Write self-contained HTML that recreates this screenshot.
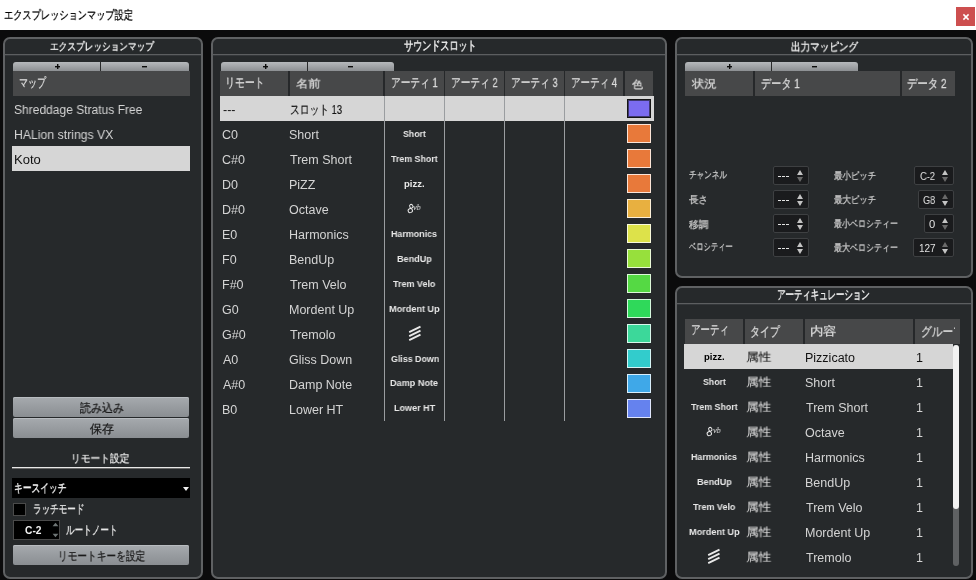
<!DOCTYPE html><html lang="ja"><head><meta charset="utf-8"><style>span{will-change:transform;-webkit-font-smoothing:antialiased}html,body{margin:0;padding:0;width:976px;height:580px;overflow:hidden;background:#0b0b0c;position:relative}</style></head><body><div style="position:absolute;left:0px;top:0px;width:976px;height:30px;background:#ffffff"></div><div style="position:absolute;left:0px;top:30px;width:976px;height:550px;background:#0b0b0c"></div><span style="position:absolute;left:3.53px;top:9.00px;white-space:pre;line-height:1;font-family:'Liberation Sans',sans-serif;font-size:12px;font-weight:400;color:#000000;transform:scale(0.7681,1.0000);transform-origin:0 0;-webkit-text-stroke:0.3px #000000;">エクスプレッションマップ設定</span><div style="position:absolute;left:956px;top:7px;width:19px;height:19px;background:#cd4f4f"></div><svg style="position:absolute;left:960px;top:11px" width="12" height="12" viewBox="0 0 12 12"><path d="M3.4 3.4 L8.6 8.6 M8.6 3.4 L3.4 8.6" stroke="#ffffff" stroke-width="1.5" fill="none"/></svg><div style="position:absolute;left:3px;top:37px;width:200px;height:542px;box-sizing:border-box;border:2px solid #5f6163;border-radius:7px;background:#26292b"></div><div style="position:absolute;left:5px;top:54px;width:196px;height:1px;background:#5c5e60"></div><div style="position:absolute;left:5px;top:55px;width:196px;height:1px;background:#34373a"></div><span style="position:absolute;left:49.98px;top:41.00px;white-space:pre;line-height:1;font-family:'Liberation Sans',sans-serif;font-size:12px;font-weight:400;color:#f2f2f2;transform:scale(0.7222,0.9000);transform-origin:0 0;-webkit-text-stroke:0.35px #f2f2f2;">エクスプレッションマップ</span><div style="position:absolute;left:211px;top:37px;width:456px;height:542px;box-sizing:border-box;border:2px solid #5f6163;border-radius:7px;background:#26292b"></div><div style="position:absolute;left:213px;top:54px;width:452px;height:1px;background:#5c5e60"></div><div style="position:absolute;left:213px;top:55px;width:452px;height:1px;background:#34373a"></div><span style="position:absolute;left:404.30px;top:39.35px;white-space:pre;line-height:1;font-family:'Liberation Sans',sans-serif;font-size:12px;font-weight:400;color:#f2f2f2;transform:scale(0.7527,1.0455);transform-origin:0 0;-webkit-text-stroke:0.35px #f2f2f2;">サウンドスロット</span><div style="position:absolute;left:675px;top:37px;width:298px;height:241px;box-sizing:border-box;border:2px solid #5f6163;border-radius:7px;background:#26292b"></div><div style="position:absolute;left:677px;top:54px;width:294px;height:1px;background:#5c5e60"></div><div style="position:absolute;left:677px;top:55px;width:294px;height:1px;background:#34373a"></div><span style="position:absolute;left:790.60px;top:41.00px;white-space:pre;line-height:1;font-family:'Liberation Sans',sans-serif;font-size:12px;font-weight:400;color:#f2f2f2;transform:scale(0.7976,0.9583);transform-origin:0 0;-webkit-text-stroke:0.35px #f2f2f2;">出力マッピング</span><div style="position:absolute;left:675px;top:286px;width:298px;height:293px;box-sizing:border-box;border:2px solid #5f6163;border-radius:7px;background:#26292b"></div><div style="position:absolute;left:677px;top:303px;width:294px;height:1px;background:#5c5e60"></div><div style="position:absolute;left:677px;top:304px;width:294px;height:1px;background:#34373a"></div><span style="position:absolute;left:777.40px;top:288.35px;white-space:pre;line-height:1;font-family:'Liberation Sans',sans-serif;font-size:12px;font-weight:400;color:#f2f2f2;transform:scale(0.7000,1.0455);transform-origin:0 0;-webkit-text-stroke:0.35px #f2f2f2;">アーティキュレーション</span><div style="position:absolute;left:13px;top:62px;width:87px;height:9px;background:linear-gradient(#b6b9bc,#8c8f92);border-top-left-radius:3px"></div><div style="position:absolute;left:100px;top:62px;width:1px;height:9px;background:#2a2b2c"></div><div style="position:absolute;left:101px;top:62px;width:88px;height:9px;background:linear-gradient(#b6b9bc,#8c8f92);border-top-right-radius:3px"></div><div style="position:absolute;left:55px;top:66px;width:5px;height:1px;background:#0c0c0c;box-shadow:0 0.4px 0 #0c0c0c"></div><div style="position:absolute;left:57px;top:64px;width:1px;height:5px;background:#0c0c0c;box-shadow:0.4px 0 0 #0c0c0c"></div><div style="position:absolute;left:142px;top:66px;width:5px;height:1px;background:#0c0c0c;box-shadow:0 0.4px 0 #0c0c0c"></div><div style="position:absolute;left:13px;top:71px;width:177px;height:25px;background:#474849"></div><span style="position:absolute;left:19.31px;top:76.00px;white-space:pre;line-height:1;font-family:'Liberation Sans',sans-serif;font-size:13px;font-weight:400;color:#dadada;transform:scale(0.6923,1.0000);transform-origin:0 0;-webkit-text-stroke:0.3px #dadada;">マップ</span><span style="position:absolute;left:13.54px;top:104.00px;white-space:pre;line-height:1;font-family:'Liberation Sans',sans-serif;font-size:12.5px;font-weight:400;color:#d4d4d4;transform:scale(0.9621,1.0000);transform-origin:0 0;">Shreddage Stratus Free</span><span style="position:absolute;left:13.82px;top:129.00px;white-space:pre;line-height:1;font-family:'Liberation Sans',sans-serif;font-size:12.5px;font-weight:400;color:#d4d4d4;transform:scale(0.9800,1.0000);transform-origin:0 0;">HALion strings VX</span><div style="position:absolute;left:12px;top:146px;width:178px;height:25px;background:#d6d6d6"></div><span style="position:absolute;left:13.76px;top:154.00px;white-space:pre;line-height:1;font-family:'Liberation Sans',sans-serif;font-size:12.5px;font-weight:400;color:#111;transform:scale(1.0417,1.0000);transform-origin:0 0;">Koto</span><div style="position:absolute;left:13px;top:397px;width:176px;height:20px;background:linear-gradient(#a6aaae,#8a8e92);border-radius:2px;box-shadow:inset 0 1px 0 #b8bcc0"></div><span style="position:absolute;left:80.00px;top:402.40px;white-space:pre;line-height:1;font-family:'Liberation Sans',sans-serif;font-size:12px;font-weight:400;color:#1a1a1a;transform:scale(0.9167,1.0000);transform-origin:0 0;-webkit-text-stroke:0.25px #1a1a1a;">読み込み</span><div style="position:absolute;left:13px;top:418px;width:176px;height:20px;background:linear-gradient(#a6aaae,#8a8e92);border-radius:2px;box-shadow:inset 0 1px 0 #b8bcc0"></div><span style="position:absolute;left:90.00px;top:423.40px;white-space:pre;line-height:1;font-family:'Liberation Sans',sans-serif;font-size:12px;font-weight:400;color:#1a1a1a;-webkit-text-stroke:0.25px #1a1a1a;">保存</span><span style="position:absolute;left:71.38px;top:453.30px;white-space:pre;line-height:1;font-family:'Liberation Sans',sans-serif;font-size:12px;font-weight:400;color:#ececec;transform:scale(0.8116,0.8917);transform-origin:0 0;-webkit-text-stroke:0.3px #ececec;">リモート設定</span><div style="position:absolute;left:12px;top:467px;width:178px;height:1px;background:#e8e8e8"></div><div style="position:absolute;left:12px;top:468px;width:178px;height:1px;background:#6a6a6a"></div><div style="position:absolute;left:12px;top:478px;width:178px;height:20px;background:#000"></div><span style="position:absolute;left:14.27px;top:482.00px;white-space:pre;line-height:1;font-family:'Liberation Sans',sans-serif;font-size:12px;font-weight:400;color:#f0f0f0;transform:scale(0.7286,1.0000);transform-origin:0 0;-webkit-text-stroke:0.4px #f0f0f0;">キースイッチ</span><div style="position:absolute;left:183px;top:487px;width:0;height:0;border-left:3.5px solid transparent;border-right:3.5px solid transparent;border-top:4px solid #f0f0f0"></div><div style="position:absolute;left:13px;top:503px;width:13px;height:13px;box-sizing:border-box;background:#000;border:1px solid #4a4a4a"></div><span style="position:absolute;left:32.69px;top:502.60px;white-space:pre;line-height:1;font-family:'Liberation Sans',sans-serif;font-size:12px;font-weight:400;color:#e6e6e6;transform:scale(0.7143,1.0000);transform-origin:0 0;-webkit-text-stroke:0.3px #e6e6e6;">ラッチモード</span><div style="position:absolute;left:13px;top:520px;width:47px;height:20px;box-sizing:border-box;background:#000;border:1px solid #4a4a4a"></div><span style="position:absolute;left:24.80px;top:526.00px;white-space:pre;line-height:1;font-family:'Liberation Sans',sans-serif;font-size:10px;font-weight:700;color:#f0f0f0;transform:scale(1.0250,1.0000);transform-origin:0 0;">C-2</span><span style="position:absolute;left:66.20px;top:524.00px;white-space:pre;line-height:1;font-family:'Liberation Sans',sans-serif;font-size:12px;font-weight:400;color:#e6e6e6;transform:scale(0.7174,1.0000);transform-origin:0 0;-webkit-text-stroke:0.3px #e6e6e6;">ルートノート</span><svg style="position:absolute;left:52px;top:522px" width="8" height="16" viewBox="0 0 8 16"><path d="M0.6 4.2 L3.5 0.8 L6.4 4.2 Z" fill="#6e7575"/><path d="M0.6 11.8 L3.5 15.2 L6.4 11.8 Z" fill="#6e7575"/></svg><div style="position:absolute;left:13px;top:545px;width:176px;height:20px;background:linear-gradient(#a6aaae,#8a8e92);border-radius:2px;box-shadow:inset 0 1px 0 #b8bcc0"></div><span style="position:absolute;left:57.58px;top:550.40px;white-space:pre;line-height:1;font-family:'Liberation Sans',sans-serif;font-size:12px;font-weight:400;color:#1a1a1a;transform:scale(0.8077,1.0000);transform-origin:0 0;-webkit-text-stroke:0.25px #1a1a1a;">リモートキーを設定</span><div style="position:absolute;left:221px;top:62px;width:86px;height:9px;background:linear-gradient(#b6b9bc,#8c8f92);border-top-left-radius:3px"></div><div style="position:absolute;left:307px;top:62px;width:1px;height:9px;background:#2a2b2c"></div><div style="position:absolute;left:308px;top:62px;width:86px;height:9px;background:linear-gradient(#b6b9bc,#8c8f92);border-top-right-radius:3px"></div><div style="position:absolute;left:263px;top:66px;width:5px;height:1px;background:#0c0c0c;box-shadow:0 0.4px 0 #0c0c0c"></div><div style="position:absolute;left:265px;top:64px;width:1px;height:5px;background:#0c0c0c;box-shadow:0.4px 0 0 #0c0c0c"></div><div style="position:absolute;left:348px;top:66px;width:5px;height:1px;background:#0c0c0c;box-shadow:0 0.4px 0 #0c0c0c"></div><div style="position:absolute;left:220px;top:71px;width:433px;height:25px;background:#474849"></div><div style="position:absolute;left:288px;top:71px;width:2px;height:25px;background:#26282a"></div><div style="position:absolute;left:383px;top:71px;width:2px;height:25px;background:#26282a"></div><div style="position:absolute;left:444px;top:71px;width:1px;height:25px;background:#26282a"></div><div style="position:absolute;left:504px;top:71px;width:1px;height:25px;background:#26282a"></div><div style="position:absolute;left:564px;top:71px;width:1px;height:25px;background:#26282a"></div><div style="position:absolute;left:623px;top:71px;width:2px;height:25px;background:#26282a"></div><span style="position:absolute;left:225.02px;top:76.40px;white-space:pre;line-height:1;font-family:'Liberation Sans',sans-serif;font-size:13px;font-weight:400;color:#dadada;transform:scale(0.7609,1.0000);transform-origin:0 0;-webkit-text-stroke:0.3px #dadada;">リモート</span><span style="position:absolute;left:295.60px;top:78.10px;white-space:pre;line-height:1;font-family:'Liberation Sans',sans-serif;font-size:13px;font-weight:400;color:#dadada;transform:scale(0.9462,0.8462);transform-origin:0 0;-webkit-text-stroke:0.3px #dadada;">名前</span><span style="position:absolute;left:390.65px;top:76.00px;white-space:pre;line-height:1;font-family:'Liberation Sans',sans-serif;font-size:13px;font-weight:400;color:#dadada;transform:scale(0.7459,1.0000);transform-origin:0 0;-webkit-text-stroke:0.3px #dadada;">アーティ 1</span><span style="position:absolute;left:450.85px;top:76.00px;white-space:pre;line-height:1;font-family:'Liberation Sans',sans-serif;font-size:13px;font-weight:400;color:#dadada;transform:scale(0.7459,1.0000);transform-origin:0 0;-webkit-text-stroke:0.3px #dadada;">アーティ 2</span><span style="position:absolute;left:510.85px;top:76.00px;white-space:pre;line-height:1;font-family:'Liberation Sans',sans-serif;font-size:13px;font-weight:400;color:#dadada;transform:scale(0.7459,1.0000);transform-origin:0 0;-webkit-text-stroke:0.3px #dadada;">アーティ 3</span><span style="position:absolute;left:570.77px;top:76.00px;white-space:pre;line-height:1;font-family:'Liberation Sans',sans-serif;font-size:13px;font-weight:400;color:#dadada;transform:scale(0.7339,1.0000);transform-origin:0 0;-webkit-text-stroke:0.3px #dadada;">アーティ 4</span><span style="position:absolute;left:631.50px;top:78.80px;white-space:pre;line-height:1;font-family:'Liberation Sans',sans-serif;font-size:13px;font-weight:400;color:#dadada;transform:scale(0.8462,0.8231);transform-origin:0 0;-webkit-text-stroke:0.3px #dadada;">色</span><div style="position:absolute;left:220px;top:96px;width:434px;height:25px;background:#d6d6d6"></div><div style="position:absolute;left:384px;top:96px;width:1px;height:325px;background:#9a9da0"></div><div style="position:absolute;left:444px;top:96px;width:1px;height:325px;background:#9a9da0"></div><div style="position:absolute;left:504px;top:96px;width:1px;height:325px;background:#9a9da0"></div><div style="position:absolute;left:564px;top:96px;width:1px;height:325px;background:#9a9da0"></div><span style="position:absolute;left:222.50px;top:104.00px;white-space:pre;line-height:1;font-family:'Liberation Sans',sans-serif;font-size:12.5px;font-weight:400;color:#111;">---</span><span style="position:absolute;left:289.55px;top:104.00px;white-space:pre;line-height:1;font-family:'Liberation Sans',sans-serif;font-size:12.5px;font-weight:400;color:#111;transform:scale(0.7500,1.0000);transform-origin:0 0;-webkit-text-stroke:0.12px #111;">スロット 13</span><div style="position:absolute;left:627px;top:99px;width:24px;height:19px;box-sizing:border-box;background:#7b6cf0;border:1px solid #151515;box-shadow:inset 0 0 0 1px rgba(21,21,21,0.6)"></div><span style="position:absolute;left:221.50px;top:129.00px;white-space:pre;line-height:1;font-family:'Liberation Sans',sans-serif;font-size:12.5px;font-weight:400;color:#d4d4d4;">C0</span><span style="position:absolute;left:289.30px;top:129.00px;white-space:pre;line-height:1;font-family:'Liberation Sans',sans-serif;font-size:12.5px;font-weight:400;color:#d4d4d4;">Short</span><span style="position:absolute;left:403.00px;top:129.00px;white-space:pre;line-height:1;font-family:'Liberation Sans',sans-serif;font-size:9.5px;font-weight:700;color:#e8e8e8;transform:scale(0.9200,1.0000);transform-origin:0 0;letter-spacing:-0.4px-webkit-text-stroke:0.3px #e8e8e8;">Short</span><div style="position:absolute;left:627px;top:124px;width:24px;height:19px;box-sizing:border-box;background:#e8793a;border:1px solid rgba(255,255,255,0.8)"></div><span style="position:absolute;left:221.50px;top:154.00px;white-space:pre;line-height:1;font-family:'Liberation Sans',sans-serif;font-size:12.5px;font-weight:400;color:#d4d4d4;">C#0</span><span style="position:absolute;left:290.30px;top:154.00px;white-space:pre;line-height:1;font-family:'Liberation Sans',sans-serif;font-size:12.5px;font-weight:400;color:#d4d4d4;">Trem Short</span><span style="position:absolute;left:391.25px;top:154.00px;white-space:pre;line-height:1;font-family:'Liberation Sans',sans-serif;font-size:9.5px;font-weight:700;color:#e8e8e8;transform:scale(0.9300,1.0000);transform-origin:0 0;letter-spacing:-0.4px-webkit-text-stroke:0.3px #e8e8e8;">Trem Short</span><div style="position:absolute;left:627px;top:149px;width:24px;height:19px;box-sizing:border-box;background:#e8793a;border:1px solid rgba(255,255,255,0.8)"></div><span style="position:absolute;left:221.50px;top:179.00px;white-space:pre;line-height:1;font-family:'Liberation Sans',sans-serif;font-size:12.5px;font-weight:400;color:#d4d4d4;">D0</span><span style="position:absolute;left:289.30px;top:179.00px;white-space:pre;line-height:1;font-family:'Liberation Sans',sans-serif;font-size:12.5px;font-weight:400;color:#d4d4d4;">PiZZ</span><span style="position:absolute;left:404.00px;top:179.00px;white-space:pre;line-height:1;font-family:'Liberation Sans',sans-serif;font-size:9.5px;font-weight:700;color:#e8e8e8;letter-spacing:-0.4px-webkit-text-stroke:0.3px #e8e8e8;">pizz.</span><div style="position:absolute;left:627px;top:174px;width:24px;height:19px;box-sizing:border-box;background:#e8793a;border:1px solid rgba(255,255,255,0.8)"></div><span style="position:absolute;left:221.50px;top:204.00px;white-space:pre;line-height:1;font-family:'Liberation Sans',sans-serif;font-size:12.5px;font-weight:400;color:#d4d4d4;">D#0</span><span style="position:absolute;left:289.30px;top:204.00px;white-space:pre;line-height:1;font-family:'Liberation Sans',sans-serif;font-size:12.5px;font-weight:400;color:#d4d4d4;">Octave</span><svg style="position:absolute;left:405.5px;top:203px" width="10" height="12" viewBox="0 0 10 12"><ellipse cx="5.3" cy="3.3" rx="1.6" ry="1.9" transform="rotate(-25 5.3 3.3)" stroke="#e8e8e8" stroke-width="1" fill="none"/><ellipse cx="4.3" cy="7.6" rx="2.2" ry="2.0" transform="rotate(-25 4.3 7.6)" stroke="#e8e8e8" stroke-width="1" fill="none"/></svg><span style="position:absolute;left:413.00px;top:203.00px;white-space:pre;line-height:1;font-family:'Liberation Serif',sans-serif;font-size:8.5px;font-weight:400;color:#e8e8e8;transform:scale(0.9375,1.0000);transform-origin:0 0;font-style:italic">vb</span><div style="position:absolute;left:627px;top:199px;width:24px;height:19px;box-sizing:border-box;background:#e8b040;border:1px solid rgba(255,255,255,0.8)"></div><span style="position:absolute;left:221.50px;top:229.00px;white-space:pre;line-height:1;font-family:'Liberation Sans',sans-serif;font-size:12.5px;font-weight:400;color:#d4d4d4;">E0</span><span style="position:absolute;left:289.30px;top:229.00px;white-space:pre;line-height:1;font-family:'Liberation Sans',sans-serif;font-size:12.5px;font-weight:400;color:#d4d4d4;">Harmonics</span><span style="position:absolute;left:391.06px;top:229.00px;white-space:pre;line-height:1;font-family:'Liberation Sans',sans-serif;font-size:9.5px;font-weight:700;color:#e8e8e8;transform:scale(0.9375,1.0000);transform-origin:0 0;letter-spacing:-0.4px-webkit-text-stroke:0.3px #e8e8e8;">Harmonics</span><div style="position:absolute;left:627px;top:224px;width:24px;height:19px;box-sizing:border-box;background:#dde24a;border:1px solid rgba(255,255,255,0.8)"></div><span style="position:absolute;left:221.50px;top:254.00px;white-space:pre;line-height:1;font-family:'Liberation Sans',sans-serif;font-size:12.5px;font-weight:400;color:#d4d4d4;">F0</span><span style="position:absolute;left:289.30px;top:254.00px;white-space:pre;line-height:1;font-family:'Liberation Sans',sans-serif;font-size:12.5px;font-weight:400;color:#d4d4d4;">BendUp</span><span style="position:absolute;left:396.79px;top:254.00px;white-space:pre;line-height:1;font-family:'Liberation Sans',sans-serif;font-size:9.5px;font-weight:700;color:#e8e8e8;transform:scale(0.9571,1.0000);transform-origin:0 0;letter-spacing:-0.4px-webkit-text-stroke:0.3px #e8e8e8;">BendUp</span><div style="position:absolute;left:627px;top:249px;width:24px;height:19px;box-sizing:border-box;background:#97e03c;border:1px solid rgba(255,255,255,0.8)"></div><span style="position:absolute;left:221.50px;top:279.00px;white-space:pre;line-height:1;font-family:'Liberation Sans',sans-serif;font-size:12.5px;font-weight:400;color:#d4d4d4;">F#0</span><span style="position:absolute;left:290.30px;top:279.00px;white-space:pre;line-height:1;font-family:'Liberation Sans',sans-serif;font-size:12.5px;font-weight:400;color:#d4d4d4;">Trem Velo</span><span style="position:absolute;left:393.25px;top:279.00px;white-space:pre;line-height:1;font-family:'Liberation Sans',sans-serif;font-size:9.5px;font-weight:700;color:#e8e8e8;transform:scale(0.9444,1.0000);transform-origin:0 0;letter-spacing:-0.4px-webkit-text-stroke:0.3px #e8e8e8;">Trem Velo</span><div style="position:absolute;left:627px;top:274px;width:24px;height:19px;box-sizing:border-box;background:#55d944;border:1px solid rgba(255,255,255,0.8)"></div><span style="position:absolute;left:221.50px;top:304.00px;white-space:pre;line-height:1;font-family:'Liberation Sans',sans-serif;font-size:12.5px;font-weight:400;color:#d4d4d4;">G0</span><span style="position:absolute;left:289.30px;top:304.00px;white-space:pre;line-height:1;font-family:'Liberation Sans',sans-serif;font-size:12.5px;font-weight:400;color:#d4d4d4;">Mordent Up</span><span style="position:absolute;left:389.04px;top:304.00px;white-space:pre;line-height:1;font-family:'Liberation Sans',sans-serif;font-size:9.5px;font-weight:700;color:#e8e8e8;transform:scale(0.9608,1.0000);transform-origin:0 0;letter-spacing:-0.4px-webkit-text-stroke:0.3px #e8e8e8;">Mordent Up</span><div style="position:absolute;left:627px;top:299px;width:24px;height:19px;box-sizing:border-box;background:#2fd95a;border:1px solid rgba(255,255,255,0.8)"></div><span style="position:absolute;left:221.50px;top:329.00px;white-space:pre;line-height:1;font-family:'Liberation Sans',sans-serif;font-size:12.5px;font-weight:400;color:#d4d4d4;">G#0</span><span style="position:absolute;left:290.30px;top:329.00px;white-space:pre;line-height:1;font-family:'Liberation Sans',sans-serif;font-size:12.5px;font-weight:400;color:#d4d4d4;">Tremolo</span><svg style="position:absolute;left:407.5px;top:324px" width="14" height="18" viewBox="0 0 14 18"><path d="M1.2 8.1 L12.5 2.7 M1.2 12.1 L12.5 6.7 M1.2 16.1 L12.5 10.7" stroke="#e8e8e8" stroke-width="1.9" fill="none"/></svg><div style="position:absolute;left:627px;top:324px;width:24px;height:19px;box-sizing:border-box;background:#3cd89a;border:1px solid rgba(255,255,255,0.8)"></div><span style="position:absolute;left:222.50px;top:354.00px;white-space:pre;line-height:1;font-family:'Liberation Sans',sans-serif;font-size:12.5px;font-weight:400;color:#d4d4d4;">A0</span><span style="position:absolute;left:289.30px;top:354.00px;white-space:pre;line-height:1;font-family:'Liberation Sans',sans-serif;font-size:12.5px;font-weight:400;color:#d4d4d4;">Gliss Down</span><span style="position:absolute;left:390.75px;top:354.00px;white-space:pre;line-height:1;font-family:'Liberation Sans',sans-serif;font-size:9.5px;font-weight:700;color:#e8e8e8;transform:scale(0.9314,1.0000);transform-origin:0 0;letter-spacing:-0.4px-webkit-text-stroke:0.3px #e8e8e8;">Gliss Down</span><div style="position:absolute;left:627px;top:349px;width:24px;height:19px;box-sizing:border-box;background:#32cccc;border:1px solid rgba(255,255,255,0.8)"></div><span style="position:absolute;left:222.50px;top:379.00px;white-space:pre;line-height:1;font-family:'Liberation Sans',sans-serif;font-size:12.5px;font-weight:400;color:#d4d4d4;">A#0</span><span style="position:absolute;left:289.30px;top:379.00px;white-space:pre;line-height:1;font-family:'Liberation Sans',sans-serif;font-size:12.5px;font-weight:400;color:#d4d4d4;">Damp Note</span><span style="position:absolute;left:390.04px;top:378.00px;white-space:pre;line-height:1;font-family:'Liberation Sans',sans-serif;font-size:9.5px;font-weight:700;color:#e8e8e8;transform:scale(0.9592,1.0000);transform-origin:0 0;letter-spacing:-0.4px-webkit-text-stroke:0.3px #e8e8e8;">Damp Note</span><div style="position:absolute;left:627px;top:374px;width:24px;height:19px;box-sizing:border-box;background:#3fa8e8;border:1px solid rgba(255,255,255,0.8)"></div><span style="position:absolute;left:221.50px;top:404.00px;white-space:pre;line-height:1;font-family:'Liberation Sans',sans-serif;font-size:12.5px;font-weight:400;color:#d4d4d4;">B0</span><span style="position:absolute;left:289.30px;top:404.00px;white-space:pre;line-height:1;font-family:'Liberation Sans',sans-serif;font-size:12.5px;font-weight:400;color:#d4d4d4;">Lower HT</span><span style="position:absolute;left:393.55px;top:403.00px;white-space:pre;line-height:1;font-family:'Liberation Sans',sans-serif;font-size:9.5px;font-weight:700;color:#e8e8e8;transform:scale(0.9524,1.0000);transform-origin:0 0;letter-spacing:-0.4px-webkit-text-stroke:0.3px #e8e8e8;">Lower HT</span><div style="position:absolute;left:627px;top:399px;width:24px;height:19px;box-sizing:border-box;background:#6582ee;border:1px solid rgba(255,255,255,0.8)"></div><div style="position:absolute;left:685px;top:62px;width:86px;height:9px;background:linear-gradient(#b6b9bc,#8c8f92);border-top-left-radius:3px"></div><div style="position:absolute;left:771px;top:62px;width:1px;height:9px;background:#2a2b2c"></div><div style="position:absolute;left:772px;top:62px;width:86px;height:9px;background:linear-gradient(#b6b9bc,#8c8f92);border-top-right-radius:3px"></div><div style="position:absolute;left:727px;top:66px;width:5px;height:1px;background:#0c0c0c;box-shadow:0 0.4px 0 #0c0c0c"></div><div style="position:absolute;left:729px;top:64px;width:1px;height:5px;background:#0c0c0c;box-shadow:0.4px 0 0 #0c0c0c"></div><div style="position:absolute;left:812px;top:66px;width:5px;height:1px;background:#0c0c0c;box-shadow:0 0.4px 0 #0c0c0c"></div><div style="position:absolute;left:685px;top:71px;width:270px;height:25px;background:#474849"></div><div style="position:absolute;left:753px;top:71px;width:2px;height:25px;background:#26282a"></div><div style="position:absolute;left:900px;top:71px;width:2px;height:25px;background:#26282a"></div><span style="position:absolute;left:691.80px;top:77.50px;white-space:pre;line-height:1;font-family:'Liberation Sans',sans-serif;font-size:13px;font-weight:400;color:#dadada;transform:scale(0.9462,0.8615);transform-origin:0 0;-webkit-text-stroke:0.3px #dadada;">状況</span><span style="position:absolute;left:760.72px;top:76.50px;white-space:pre;line-height:1;font-family:'Liberation Sans',sans-serif;font-size:13px;font-weight:400;color:#dadada;transform:scale(0.7812,1.0000);transform-origin:0 0;-webkit-text-stroke:0.3px #dadada;">データ 1</span><span style="position:absolute;left:907.40px;top:76.50px;white-space:pre;line-height:1;font-family:'Liberation Sans',sans-serif;font-size:13px;font-weight:400;color:#dadada;transform:scale(0.7979,1.0000);transform-origin:0 0;-webkit-text-stroke:0.3px #dadada;">データ 2</span><span style="position:absolute;left:689.00px;top:170.00px;white-space:pre;line-height:1;font-family:'Liberation Sans',sans-serif;font-size:10px;font-weight:400;color:#c8c8c8;transform:scale(0.7600,1.0000);transform-origin:0 0;-webkit-text-stroke:0.3px #c8c8c8;">チャンネル</span><span style="position:absolute;left:833.80px;top:171.00px;white-space:pre;line-height:1;font-family:'Liberation Sans',sans-serif;font-size:10px;font-weight:400;color:#c8c8c8;transform:scale(0.8429,1.0000);transform-origin:0 0;-webkit-text-stroke:0.3px #c8c8c8;">最小ピッチ</span><div style="position:absolute;left:773px;top:166px;width:36px;height:19px;box-sizing:border-box;background:#1a1b1d;border:1px solid #3e4042;border-radius:2px"></div><div style="position:absolute;left:778px;top:176px;width:3px;height:1px;background:#e2e2e2"></div><div style="position:absolute;left:782px;top:176px;width:3px;height:1px;background:#e2e2e2"></div><div style="position:absolute;left:786px;top:176px;width:3px;height:1px;background:#e2e2e2"></div><div style="position:absolute;left:797px;top:170px;width:0;height:0;border-left:3.5px solid transparent;border-right:3.5px solid transparent;border-bottom:5px solid #c4c4c4"></div><div style="position:absolute;left:797px;top:177px;width:0;height:0;border-left:3.5px solid transparent;border-right:3.5px solid transparent;border-top:5px solid #6a6a6a"></div><div style="position:absolute;left:914px;top:166px;width:40px;height:19px;box-sizing:border-box;background:#1a1b1d;border:1px solid #3e4042;border-radius:2px"></div><span style="position:absolute;left:920.00px;top:172.00px;white-space:pre;line-height:1;font-family:'Liberation Sans',sans-serif;font-size:10px;font-weight:400;color:#e0e0e0;transform:scale(0.9375,1.0000);transform-origin:0 0;">C-2</span><div style="position:absolute;left:942px;top:170px;width:0;height:0;border-left:3.5px solid transparent;border-right:3.5px solid transparent;border-bottom:5px solid #c4c4c4"></div><div style="position:absolute;left:942px;top:177px;width:0;height:0;border-left:3.5px solid transparent;border-right:3.5px solid transparent;border-top:5px solid #6a6a6a"></div><span style="position:absolute;left:689.00px;top:195.00px;white-space:pre;line-height:1;font-family:'Liberation Sans',sans-serif;font-size:10px;font-weight:400;color:#c8c8c8;transform:scale(0.9444,1.0000);transform-origin:0 0;-webkit-text-stroke:0.3px #c8c8c8;">長さ</span><span style="position:absolute;left:833.80px;top:195.00px;white-space:pre;line-height:1;font-family:'Liberation Sans',sans-serif;font-size:10px;font-weight:400;color:#c8c8c8;transform:scale(0.8429,1.0000);transform-origin:0 0;-webkit-text-stroke:0.3px #c8c8c8;">最大ピッチ</span><div style="position:absolute;left:773px;top:190px;width:36px;height:19px;box-sizing:border-box;background:#1a1b1d;border:1px solid #3e4042;border-radius:2px"></div><div style="position:absolute;left:778px;top:200px;width:3px;height:1px;background:#e2e2e2"></div><div style="position:absolute;left:782px;top:200px;width:3px;height:1px;background:#e2e2e2"></div><div style="position:absolute;left:786px;top:200px;width:3px;height:1px;background:#e2e2e2"></div><div style="position:absolute;left:797px;top:194px;width:0;height:0;border-left:3.5px solid transparent;border-right:3.5px solid transparent;border-bottom:5px solid #c4c4c4"></div><div style="position:absolute;left:797px;top:201px;width:0;height:0;border-left:3.5px solid transparent;border-right:3.5px solid transparent;border-top:5px solid #c4c4c4"></div><div style="position:absolute;left:918px;top:190px;width:36px;height:19px;box-sizing:border-box;background:#1a1b1d;border:1px solid #3e4042;border-radius:2px"></div><span style="position:absolute;left:923.00px;top:196.00px;white-space:pre;line-height:1;font-family:'Liberation Sans',sans-serif;font-size:10px;font-weight:400;color:#e0e0e0;transform:scale(0.9231,1.0000);transform-origin:0 0;">G8</span><div style="position:absolute;left:942px;top:194px;width:0;height:0;border-left:3.5px solid transparent;border-right:3.5px solid transparent;border-bottom:5px solid #6a6a6a"></div><div style="position:absolute;left:942px;top:201px;width:0;height:0;border-left:3.5px solid transparent;border-right:3.5px solid transparent;border-top:5px solid #c4c4c4"></div><span style="position:absolute;left:689.00px;top:220.00px;white-space:pre;line-height:1;font-family:'Liberation Sans',sans-serif;font-size:10px;font-weight:400;color:#c8c8c8;transform:scale(0.9700,1.0000);transform-origin:0 0;-webkit-text-stroke:0.3px #c8c8c8;">移調</span><span style="position:absolute;left:833.80px;top:219.00px;white-space:pre;line-height:1;font-family:'Liberation Sans',sans-serif;font-size:10px;font-weight:400;color:#c8c8c8;transform:scale(0.8000,1.0000);transform-origin:0 0;-webkit-text-stroke:0.3px #c8c8c8;">最小ベロシティー</span><div style="position:absolute;left:773px;top:214px;width:36px;height:19px;box-sizing:border-box;background:#1a1b1d;border:1px solid #3e4042;border-radius:2px"></div><div style="position:absolute;left:778px;top:224px;width:3px;height:1px;background:#e2e2e2"></div><div style="position:absolute;left:782px;top:224px;width:3px;height:1px;background:#e2e2e2"></div><div style="position:absolute;left:786px;top:224px;width:3px;height:1px;background:#e2e2e2"></div><div style="position:absolute;left:797px;top:218px;width:0;height:0;border-left:3.5px solid transparent;border-right:3.5px solid transparent;border-bottom:5px solid #c4c4c4"></div><div style="position:absolute;left:797px;top:225px;width:0;height:0;border-left:3.5px solid transparent;border-right:3.5px solid transparent;border-top:5px solid #c4c4c4"></div><div style="position:absolute;left:924px;top:214px;width:30px;height:19px;box-sizing:border-box;background:#1a1b1d;border:1px solid #3e4042;border-radius:2px"></div><span style="position:absolute;left:929.40px;top:220.00px;white-space:pre;line-height:1;font-family:'Liberation Sans',sans-serif;font-size:10px;font-weight:400;color:#e0e0e0;transform:scale(1.1200,1.0000);transform-origin:0 0;">0</span><div style="position:absolute;left:942px;top:218px;width:0;height:0;border-left:3.5px solid transparent;border-right:3.5px solid transparent;border-bottom:5px solid #c4c4c4"></div><div style="position:absolute;left:942px;top:225px;width:0;height:0;border-left:3.5px solid transparent;border-right:3.5px solid transparent;border-top:5px solid #6a6a6a"></div><span style="position:absolute;left:689.00px;top:242.00px;white-space:pre;line-height:1;font-family:'Liberation Sans',sans-serif;font-size:10px;font-weight:400;color:#c8c8c8;transform:scale(0.7288,1.0000);transform-origin:0 0;-webkit-text-stroke:0.3px #c8c8c8;">ベロシティー</span><span style="position:absolute;left:833.80px;top:243.00px;white-space:pre;line-height:1;font-family:'Liberation Sans',sans-serif;font-size:10px;font-weight:400;color:#c8c8c8;transform:scale(0.8000,1.0000);transform-origin:0 0;-webkit-text-stroke:0.3px #c8c8c8;">最大ベロシティー</span><div style="position:absolute;left:773px;top:238px;width:36px;height:19px;box-sizing:border-box;background:#1a1b1d;border:1px solid #3e4042;border-radius:2px"></div><div style="position:absolute;left:778px;top:248px;width:3px;height:1px;background:#e2e2e2"></div><div style="position:absolute;left:782px;top:248px;width:3px;height:1px;background:#e2e2e2"></div><div style="position:absolute;left:786px;top:248px;width:3px;height:1px;background:#e2e2e2"></div><div style="position:absolute;left:797px;top:242px;width:0;height:0;border-left:3.5px solid transparent;border-right:3.5px solid transparent;border-bottom:5px solid #c4c4c4"></div><div style="position:absolute;left:797px;top:249px;width:0;height:0;border-left:3.5px solid transparent;border-right:3.5px solid transparent;border-top:5px solid #c4c4c4"></div><div style="position:absolute;left:913px;top:238px;width:41px;height:19px;box-sizing:border-box;background:#1a1b1d;border:1px solid #3e4042;border-radius:2px"></div><span style="position:absolute;left:919.00px;top:244.00px;white-space:pre;line-height:1;font-family:'Liberation Sans',sans-serif;font-size:10px;font-weight:400;color:#e0e0e0;">127</span><div style="position:absolute;left:942px;top:242px;width:0;height:0;border-left:3.5px solid transparent;border-right:3.5px solid transparent;border-bottom:5px solid #6a6a6a"></div><div style="position:absolute;left:942px;top:249px;width:0;height:0;border-left:3.5px solid transparent;border-right:3.5px solid transparent;border-top:5px solid #c4c4c4"></div><div style="position:absolute;left:685px;top:319px;width:275px;height:25px;background:#474849"></div><div style="position:absolute;left:743px;top:319px;width:2px;height:25px;background:#26282a"></div><div style="position:absolute;left:803px;top:319px;width:2px;height:25px;background:#26282a"></div><div style="position:absolute;left:913px;top:319px;width:2px;height:25px;background:#26282a"></div><span style="position:absolute;left:690.67px;top:323.40px;white-space:pre;line-height:1;font-family:'Liberation Sans',sans-serif;font-size:13px;font-weight:400;color:#dadada;transform:scale(0.7292,1.0000);transform-origin:0 0;-webkit-text-stroke:0.3px #dadada;">アーティ</span><span style="position:absolute;left:749.77px;top:325.40px;white-space:pre;line-height:1;font-family:'Liberation Sans',sans-serif;font-size:13px;font-weight:400;color:#dadada;transform:scale(0.7632,1.0000);transform-origin:0 0;-webkit-text-stroke:0.3px #dadada;">タイプ</span><span style="position:absolute;left:810.17px;top:325.40px;white-space:pre;line-height:1;font-family:'Liberation Sans',sans-serif;font-size:13px;font-weight:400;color:#dadada;transform:scale(1.0333,0.9077);transform-origin:0 0;-webkit-text-stroke:0.3px #dadada;">内容</span><div style="position:absolute;left:915px;top:319px;width:40px;height:25px;overflow:hidden"><span style="position:absolute;left:5.77px;top:6.40px;white-space:pre;line-height:1;font-family:'Liberation Sans',sans-serif;font-size:13px;font-weight:400;color:#dadada;transform:scale(0.8269,1.0000);transform-origin:0 0;-webkit-text-stroke:0.3px #dadada;">グループ</span></div><div style="position:absolute;left:684px;top:344px;width:269px;height:25px;background:#d6d6d6"></div><span style="position:absolute;left:703.80px;top:352.00px;white-space:pre;line-height:1;font-family:'Liberation Sans',sans-serif;font-size:9.5px;font-weight:700;color:#000;letter-spacing:-0.4px-webkit-text-stroke:0.55px #000;">pizz.</span><span style="position:absolute;left:745.63px;top:351.10px;white-space:pre;line-height:1;font-family:'Liberation Sans',sans-serif;font-size:13px;font-weight:400;color:#111;transform:scale(0.9720,0.8846);transform-origin:0 0;-webkit-text-stroke:0.1px #111;">属性</span><span style="position:absolute;left:805.30px;top:352.00px;white-space:pre;line-height:1;font-family:'Liberation Sans',sans-serif;font-size:12.5px;font-weight:400;color:#111;">Pizzicato</span><span style="position:absolute;left:916.00px;top:352.00px;white-space:pre;line-height:1;font-family:'Liberation Sans',sans-serif;font-size:12.5px;font-weight:400;color:#111;">1</span><span style="position:absolute;left:702.80px;top:377.00px;white-space:pre;line-height:1;font-family:'Liberation Sans',sans-serif;font-size:9.5px;font-weight:700;color:#e8e8e8;transform:scale(0.9200,1.0000);transform-origin:0 0;letter-spacing:-0.4px-webkit-text-stroke:0.3px #e8e8e8;">Short</span><span style="position:absolute;left:745.63px;top:376.10px;white-space:pre;line-height:1;font-family:'Liberation Sans',sans-serif;font-size:13px;font-weight:400;color:#dedede;transform:scale(0.9720,0.8846);transform-origin:0 0;-webkit-text-stroke:0.1px #dedede;">属性</span><span style="position:absolute;left:805.30px;top:377.00px;white-space:pre;line-height:1;font-family:'Liberation Sans',sans-serif;font-size:12.5px;font-weight:400;color:#d4d4d4;">Short</span><span style="position:absolute;left:916.00px;top:377.00px;white-space:pre;line-height:1;font-family:'Liberation Sans',sans-serif;font-size:12.5px;font-weight:400;color:#d4d4d4;">1</span><span style="position:absolute;left:691.05px;top:402.00px;white-space:pre;line-height:1;font-family:'Liberation Sans',sans-serif;font-size:9.5px;font-weight:700;color:#e8e8e8;transform:scale(0.9300,1.0000);transform-origin:0 0;letter-spacing:-0.4px-webkit-text-stroke:0.3px #e8e8e8;">Trem Short</span><span style="position:absolute;left:745.63px;top:401.10px;white-space:pre;line-height:1;font-family:'Liberation Sans',sans-serif;font-size:13px;font-weight:400;color:#dedede;transform:scale(0.9720,0.8846);transform-origin:0 0;-webkit-text-stroke:0.1px #dedede;">属性</span><span style="position:absolute;left:806.30px;top:402.00px;white-space:pre;line-height:1;font-family:'Liberation Sans',sans-serif;font-size:12.5px;font-weight:400;color:#d4d4d4;">Trem Short</span><span style="position:absolute;left:916.00px;top:402.00px;white-space:pre;line-height:1;font-family:'Liberation Sans',sans-serif;font-size:12.5px;font-weight:400;color:#d4d4d4;">1</span><svg style="position:absolute;left:705.3px;top:426px" width="10" height="12" viewBox="0 0 10 12"><ellipse cx="5.3" cy="3.3" rx="1.6" ry="1.9" transform="rotate(-25 5.3 3.3)" stroke="#e8e8e8" stroke-width="1" fill="none"/><ellipse cx="4.3" cy="7.6" rx="2.2" ry="2.0" transform="rotate(-25 4.3 7.6)" stroke="#e8e8e8" stroke-width="1" fill="none"/></svg><span style="position:absolute;left:712.80px;top:426.00px;white-space:pre;line-height:1;font-family:'Liberation Serif',sans-serif;font-size:8.5px;font-weight:400;color:#e8e8e8;transform:scale(0.9375,1.0000);transform-origin:0 0;font-style:italic">vb</span><span style="position:absolute;left:745.63px;top:426.10px;white-space:pre;line-height:1;font-family:'Liberation Sans',sans-serif;font-size:13px;font-weight:400;color:#dedede;transform:scale(0.9720,0.8846);transform-origin:0 0;-webkit-text-stroke:0.1px #dedede;">属性</span><span style="position:absolute;left:805.30px;top:427.00px;white-space:pre;line-height:1;font-family:'Liberation Sans',sans-serif;font-size:12.5px;font-weight:400;color:#d4d4d4;">Octave</span><span style="position:absolute;left:916.00px;top:427.00px;white-space:pre;line-height:1;font-family:'Liberation Sans',sans-serif;font-size:12.5px;font-weight:400;color:#d4d4d4;">1</span><span style="position:absolute;left:690.86px;top:452.00px;white-space:pre;line-height:1;font-family:'Liberation Sans',sans-serif;font-size:9.5px;font-weight:700;color:#e8e8e8;transform:scale(0.9375,1.0000);transform-origin:0 0;letter-spacing:-0.4px-webkit-text-stroke:0.3px #e8e8e8;">Harmonics</span><span style="position:absolute;left:745.63px;top:451.10px;white-space:pre;line-height:1;font-family:'Liberation Sans',sans-serif;font-size:13px;font-weight:400;color:#dedede;transform:scale(0.9720,0.8846);transform-origin:0 0;-webkit-text-stroke:0.1px #dedede;">属性</span><span style="position:absolute;left:805.30px;top:452.00px;white-space:pre;line-height:1;font-family:'Liberation Sans',sans-serif;font-size:12.5px;font-weight:400;color:#d4d4d4;">Harmonics</span><span style="position:absolute;left:916.00px;top:452.00px;white-space:pre;line-height:1;font-family:'Liberation Sans',sans-serif;font-size:12.5px;font-weight:400;color:#d4d4d4;">1</span><span style="position:absolute;left:696.59px;top:477.00px;white-space:pre;line-height:1;font-family:'Liberation Sans',sans-serif;font-size:9.5px;font-weight:700;color:#e8e8e8;transform:scale(0.9571,1.0000);transform-origin:0 0;letter-spacing:-0.4px-webkit-text-stroke:0.3px #e8e8e8;">BendUp</span><span style="position:absolute;left:745.63px;top:476.10px;white-space:pre;line-height:1;font-family:'Liberation Sans',sans-serif;font-size:13px;font-weight:400;color:#dedede;transform:scale(0.9720,0.8846);transform-origin:0 0;-webkit-text-stroke:0.1px #dedede;">属性</span><span style="position:absolute;left:805.30px;top:477.00px;white-space:pre;line-height:1;font-family:'Liberation Sans',sans-serif;font-size:12.5px;font-weight:400;color:#d4d4d4;">BendUp</span><span style="position:absolute;left:916.00px;top:477.00px;white-space:pre;line-height:1;font-family:'Liberation Sans',sans-serif;font-size:12.5px;font-weight:400;color:#d4d4d4;">1</span><span style="position:absolute;left:693.05px;top:502.00px;white-space:pre;line-height:1;font-family:'Liberation Sans',sans-serif;font-size:9.5px;font-weight:700;color:#e8e8e8;transform:scale(0.9444,1.0000);transform-origin:0 0;letter-spacing:-0.4px-webkit-text-stroke:0.3px #e8e8e8;">Trem Velo</span><span style="position:absolute;left:745.63px;top:501.10px;white-space:pre;line-height:1;font-family:'Liberation Sans',sans-serif;font-size:13px;font-weight:400;color:#dedede;transform:scale(0.9720,0.8846);transform-origin:0 0;-webkit-text-stroke:0.1px #dedede;">属性</span><span style="position:absolute;left:806.30px;top:502.00px;white-space:pre;line-height:1;font-family:'Liberation Sans',sans-serif;font-size:12.5px;font-weight:400;color:#d4d4d4;">Trem Velo</span><span style="position:absolute;left:916.00px;top:502.00px;white-space:pre;line-height:1;font-family:'Liberation Sans',sans-serif;font-size:12.5px;font-weight:400;color:#d4d4d4;">1</span><span style="position:absolute;left:688.84px;top:527.00px;white-space:pre;line-height:1;font-family:'Liberation Sans',sans-serif;font-size:9.5px;font-weight:700;color:#e8e8e8;transform:scale(0.9608,1.0000);transform-origin:0 0;letter-spacing:-0.4px-webkit-text-stroke:0.3px #e8e8e8;">Mordent Up</span><span style="position:absolute;left:745.63px;top:526.10px;white-space:pre;line-height:1;font-family:'Liberation Sans',sans-serif;font-size:13px;font-weight:400;color:#dedede;transform:scale(0.9720,0.8846);transform-origin:0 0;-webkit-text-stroke:0.1px #dedede;">属性</span><span style="position:absolute;left:805.30px;top:527.00px;white-space:pre;line-height:1;font-family:'Liberation Sans',sans-serif;font-size:12.5px;font-weight:400;color:#d4d4d4;">Mordent Up</span><span style="position:absolute;left:916.00px;top:527.00px;white-space:pre;line-height:1;font-family:'Liberation Sans',sans-serif;font-size:12.5px;font-weight:400;color:#d4d4d4;">1</span><svg style="position:absolute;left:707.3px;top:547px" width="14" height="18" viewBox="0 0 14 18"><path d="M1.2 8.1 L12.5 2.7 M1.2 12.1 L12.5 6.7 M1.2 16.1 L12.5 10.7" stroke="#e8e8e8" stroke-width="1.9" fill="none"/></svg><span style="position:absolute;left:745.63px;top:551.10px;white-space:pre;line-height:1;font-family:'Liberation Sans',sans-serif;font-size:13px;font-weight:400;color:#dedede;transform:scale(0.9720,0.8846);transform-origin:0 0;-webkit-text-stroke:0.1px #dedede;">属性</span><span style="position:absolute;left:806.30px;top:552.00px;white-space:pre;line-height:1;font-family:'Liberation Sans',sans-serif;font-size:12.5px;font-weight:400;color:#d4d4d4;">Tremolo</span><span style="position:absolute;left:916.00px;top:552.00px;white-space:pre;line-height:1;font-family:'Liberation Sans',sans-serif;font-size:12.5px;font-weight:400;color:#d4d4d4;">1</span><div style="position:absolute;left:953px;top:345px;width:6px;height:221px;background:#5f6163;border-radius:3px"></div><div style="position:absolute;left:953px;top:345px;width:6px;height:164px;background:#f2f2f2;border-radius:3px"></div></body></html>
